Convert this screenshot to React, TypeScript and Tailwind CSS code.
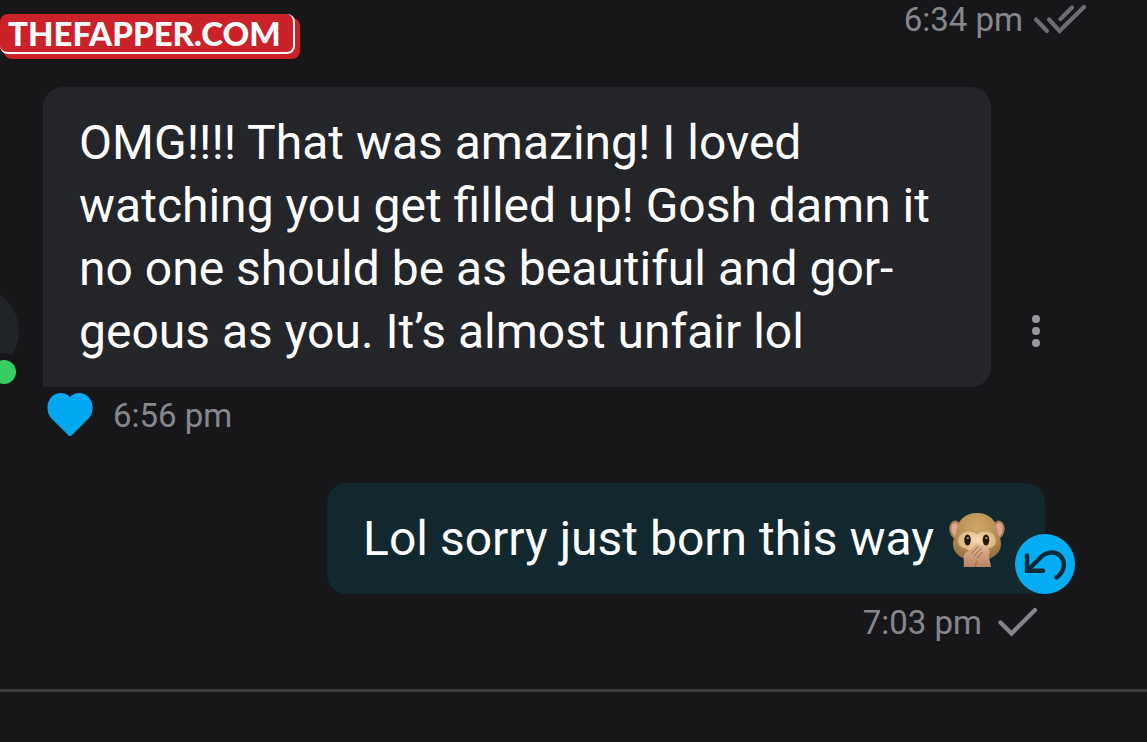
import type { ReactNode } from "react"

const SingleCheck = () => (
    <svg className="h-8 w-10" viewBox="0 0 40 32" fill="none" stroke="#85868c" strokeWidth="4.200" strokeLinecap="round" aria-hidden="true">
        <path d="M2.500 16.500 L13.500 27.500 L37 4" />
    </svg>
)

const DoubleCheck = () => (
    <svg className="h-8 w-[54px]" viewBox="0 0 54 32" fill="none" stroke="#6c6d74" strokeWidth="4.200" strokeLinecap="round" aria-hidden="true">
        <path d="M3 16.500 L14 28" />
        <path d="M16 16.500 L26.500 28 L51 4" />
        <path d="M27.500 16 L39 4.500" />
    </svg>
)

const Heart = () => (
    <svg className="h-[46px] w-[46px]" viewBox="0 0 46 46" fill="#02a9f1" aria-hidden="true">
        <path d="M21.500 43.500 L4.500 26.500 C1.500 23.500 0.500 20 0.500 15.500 C0.500 7.500 6 1 13.500 1 C17.500 1 20.800 2.500 23 5 C25.200 2.500 28.500 1 32.500 1 C40 1 45.500 7.500 45.500 15.500 C45.500 20 44.500 23.500 41.500 26.500 L24.500 43.500 C23.500 44.300 22.500 44.300 21.500 43.500 Z" />
    </svg>
)

const ReplyArrow = () => (
    <svg className="size-[60px]" viewBox="0 0 60 60" fill="none" stroke="#0b2a35" strokeWidth="4.400" strokeLinecap="round" aria-hidden="true">
        <path d="M12 21.500 V36.800 H28" />
        <path d="M13 36 L25 24 C31 17.500 40 17 45 21.500 C51 27.500 50 37.500 41.500 43.500" />
    </svg>
)

const Monkey = () => (
    <svg className="h-14 w-14" viewBox="0 0 56 56" role="img" aria-label="monkey">
        <defs>
            <radialGradient id="fur" cx="0.5" cy="0.3" r="0.7">
                <stop offset="0" stopColor="#cfa868" />
                <stop offset="0.65" stopColor="#b58d54" />
                <stop offset="1" stopColor="#93703f" />
            </radialGradient>
            <radialGradient id="face" cx="0.5" cy="0.4" r="0.6">
                <stop offset="0" stopColor="#f5dcae" />
                <stop offset="1" stopColor="#dcb27c" />
            </radialGradient>
            <linearGradient id="hand" x1="0" y1="0" x2="0" y2="1">
                <stop offset="0" stopColor="#e3b993" />
                <stop offset="1" stopColor="#b98466" />
            </linearGradient>
        </defs>
        <ellipse cx="7" cy="19" rx="6.500" ry="9.500" fill="#a9804c" transform="rotate(-12 7 19)" />
        <ellipse cx="49" cy="19" rx="6.500" ry="9.500" fill="#a9804c" transform="rotate(12 49 19)" />
        <ellipse cx="6.800" cy="19" rx="4.200" ry="7.300" fill="#dfa596" transform="rotate(-12 7 19)" />
        <ellipse cx="49.200" cy="19" rx="4.200" ry="7.300" fill="#dfa596" transform="rotate(12 49 19)" />
        <path d="M28 2 C40 2 47.500 9.500 48.500 20 C49.500 25 52 27 52 33 C52 43 42 50 28 50 C14 50 4 43 4 33 C4 27 6.500 25 7.500 20 C8.500 9.500 16 2 28 2 Z" fill="url(#fur)" />
        <path d="M28 23.500 C24 19 12 19 9.500 27.500 C8 34 12 36 17 37.500 C22 43 34 43 39 37.500 C44 36 48 34 46.500 27.500 C44 19 32 19 28 23.500 Z" fill="url(#face)" />
        <ellipse cx="18.500" cy="29" rx="3.300" ry="5.600" fill="#241811" />
        <ellipse cx="37" cy="29" rx="3.300" ry="5.600" fill="#241811" />
        <circle cx="18.800" cy="27" r="1.100" fill="#b9a791" />
        <circle cx="37.300" cy="27" r="1.100" fill="#b9a791" />
        <path d="M42 56 H26 L26 46 L31 37 C33 34 34.500 33 36 34.500 C38 34 39 36 39 38 C41 39 41 41.500 40 44 C40 49 41.500 51 42 56 Z" fill="url(#hand)" />
        <path d="M14.500 56 C15.500 51 14 47 15.500 43.500 C16.500 41 19 41 21 39 L27 33 C29 31 31 32.500 29.500 35 C32 32.500 34.500 34.500 32.500 37 C34.500 37 35 39.500 33.500 41 C34.500 43 33 44.500 31.500 46 L28 50 C26.500 52 26.500 54 26.500 56 Z" fill="url(#hand)" />
        <path d="M29.500 35 L22.500 42.500 M32.500 37 L25 45 M33.500 41 L28 47 M26.500 56 C26.500 53.500 27 51.500 28 50" stroke="#94674b" strokeWidth="1" fill="none" />
    </svg>
)

const MessageMeta = ({ className, children }: { className: string; children: ReactNode }) => (
    <div className={`flex h-14 items-center text-[33px] leading-none ${className}`}>
        {children}
    </div>
)

const App = () => {
    return (
        <main className="relative min-h-screen overflow-hidden bg-[#17171a] font-['Roboto',sans-serif]">
            <a href="#" className="absolute left-0 top-[14px] z-10 pb-[5px] pr-[5px]">
                <span className="absolute bottom-0 left-1 right-0 top-1 rounded-lg bg-[#cb2229]" />
                <span className="relative block rounded-lg border-b-2 border-r-2 border-white bg-[#cb2229] pl-2 pr-3 font-['Lato',sans-serif] text-[33px] font-black leading-[38px] text-white">
                    THEFAPPER.COM
                </span>
            </a>

            <MessageMeta className="-mt-[9px] justify-end gap-[10px] pr-[60px] text-[#85878d]">
                <time>6:34 pm</time>
                <DoubleCheck />
            </MessageMeta>

            <section className="mt-10">
                <div className="-ml-[69px] flex items-end gap-6 pr-[99px]">
                    <div className="relative mb-3 size-[88px] shrink-0 rounded-full bg-[#212426]">
                        <span className="absolute -bottom-[9px] right-[3px] size-6 rounded-full bg-[#36ce62] ring-[7px] ring-[#17171a]" />
                    </div>
                    <p className="min-w-0 flex-1 rounded-t-[20px] rounded-br-[20px] bg-[#242528] px-9 py-6 text-[48px] leading-[63px] text-white">
                        OMG!!!! That was amazing! I loved
                        <br />
                        watching you get filled up! Gosh damn it
                        <br />
                        no one should be as beautiful and gor-
                        <br />
                        geous as you. It’s almost unfair lol
                    </p>
                    <button type="button" aria-label="More" className="mb-[34px] ml-[9px] flex h-11 w-6 shrink-0 flex-col items-center justify-center gap-1">
                        <span className="size-2 rounded-full bg-[#97989f]" />
                        <span className="size-2 rounded-full bg-[#97989f]" />
                        <span className="size-2 rounded-full bg-[#97989f]" />
                    </button>
                </div>
                <MessageMeta className="gap-5 pl-[47px] text-[#85878d]">
                    <button type="button" aria-label="Like">
                        <Heart />
                    </button>
                    <time>6:56 pm</time>
                </MessageMeta>
            </section>

            <section className="mt-10">
                <div className="flex justify-end pr-[102px]">
                    <div className="relative rounded-l-[20px] rounded-tr-[20px] bg-[#12282e] px-9 py-6">
                        <p className="flex items-center gap-[15px] pr-1 text-[48px] leading-[63px] text-white">
                            Lol sorry just born this way
                            <Monkey />
                        </p>
                        <button type="button" aria-label="Reply" className="absolute -right-[30px] bottom-0 size-[60px] rounded-full bg-[#04adf3]">
                            <ReplyArrow />
                        </button>
                    </div>
                </div>
                <MessageMeta className="justify-end gap-4 pr-[109px] text-[#85878d]">
                    <time>7:03 pm</time>
                    <SingleCheck />
                </MessageMeta>
            </section>

            <hr className="mt-[39px] border-t-[3px] border-[#3a3a3c]" />
        </main>
    )
}

export default App
